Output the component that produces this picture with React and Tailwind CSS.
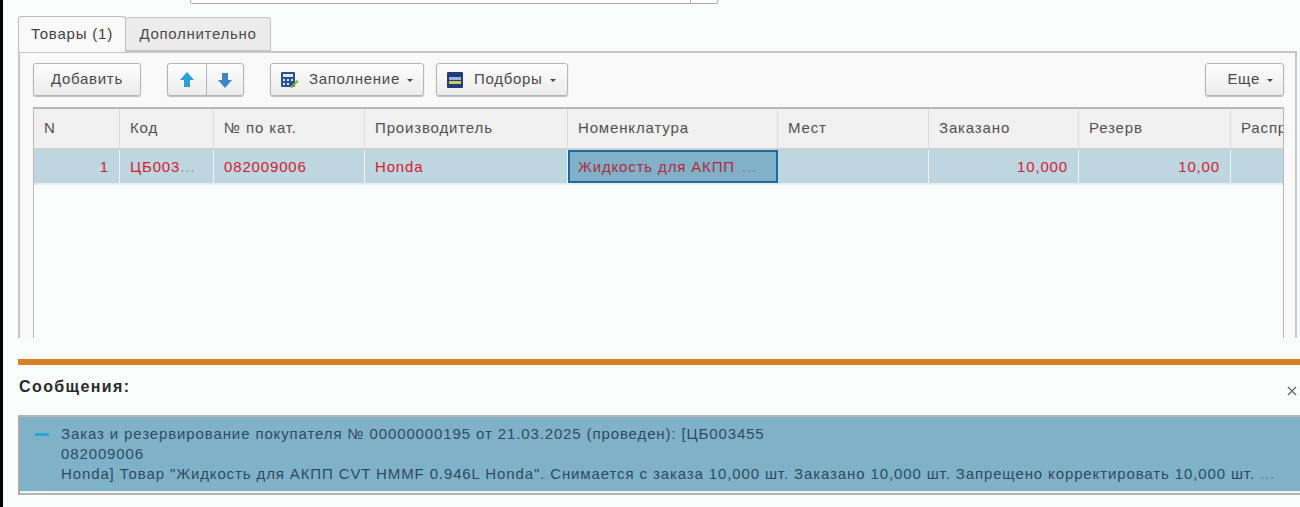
const cols = [
  { w: 'w-[86px]', h: 'N' },
  { w: 'w-[94px]', h: 'Код' },
  { w: 'w-[151px]', h: '№ по кат.' },
  { w: 'w-[203px]', h: 'Производитель' },
  { w: 'w-[210px]', h: 'Номенклатура' },
  { w: 'w-[151px]', h: 'Мест' },
  { w: 'w-[150px]', h: 'Заказано' },
  { w: 'w-[152px]', h: 'Резерв' },
  { w: 'w-[53px]', h: 'Распр' },
];

function Caret() {
  return <span className="ml-[7px] mt-[2px] inline-block h-0 w-0 border-x-[3px] border-t-[3px] border-x-transparent border-t-[#444]" />;
}

function Btn({ children, className = '' }) {
  return (
    <div className={`flex h-[33px] items-center rounded-[3px] border border-[#b4b4b4] bg-gradient-to-b from-[#fdfdfd] to-[#ececec] text-[#4a4a4a] shadow-[0_1px_1px_#bbb] ${className}`}>
      {children}
    </div>
  );
}

function Arrow({ up, color }) {
  return (
    <svg width="16" height="18" viewBox="0 0 16 18">
      <path d={up ? 'M8 1 L15 9 H11 V16 H5 V9 H1 Z' : 'M5 2 H11 V9 H15 L8 17 L1 9 H5 Z'} fill={color} />
    </svg>
  );
}

function Calc() {
  return (
    <svg width="19" height="18" viewBox="0 0 19 18">
      <rect x="1" y="1" width="14" height="15" rx="1" fill="#2b4f9b" />
      <rect x="3" y="3" width="10" height="3" fill="#dfe8f5" />
      <path d="M3 8h2v2H3zM7 8h2v2H7zM11 8h2v2h-2zM3 12h2v2H3zM7 12h2v2H7z" fill="#dfe8f5" />
      <path d="M10 16 L17 9 L18.5 10.5 L12 17 Z" fill="#7ab52f" />
      <path d="M10 16 L11 17 L9.5 17.5 Z" fill="#e8c24a" />
    </svg>
  );
}

function Pick() {
  return (
    <svg width="16" height="16" viewBox="0 0 16 16">
      <rect x="0" y="0" width="16" height="16" rx="1" fill="#1f3d7a" />
      <rect x="2" y="5" width="12" height="3" fill="#9fb2d4" />
      <rect x="2" y="9" width="12" height="3" fill="#cfc95a" />
    </svg>
  );
}

export default function App() {
  return (
    <div className="flex h-[507px] w-[1300px] flex-col overflow-hidden border-l-[3px] border-black bg-[#f9fcfa] font-['Liberation_Sans',sans-serif] text-[15px] text-[#505050]">
      <div className="ml-[187px] flex h-[4px] w-[528px] justify-end rounded-b-[2px] border-x border-b border-[#a9a9a9] bg-white">
        <div className="w-[27px] border-l border-[#a9a9a9]" />
      </div>

      <div className="ml-[15px] mt-[12px] flex h-[35px] items-end">
        <div className="z-10 -mb-px flex h-[36px] w-[108px] items-center justify-center rounded-t-[3px] border border-b-0 border-[#bdbdbd] bg-[#f9f9f9] tracking-[0.8px] text-[#404040]">
          Товары (1)
        </div>
        <div className="flex h-[34px] w-[145px] items-center justify-center rounded-t-[3px] border border-l-0 border-[#c4c4c4] bg-[#ececec] tracking-[0.7px] text-[#4a4a4a]">
          Дополнительно
        </div>
      </div>

      <div className="ml-[15px] flex h-[287px] w-[1279px] flex-col border-x-2 border-t-2 border-[#c6c6c6] bg-[#f9f9f9] pl-[13px] pr-[11px]">
        <div className="mt-[10px] flex h-[33px] items-center tracking-[0.7px]">
          <Btn className="w-[108px] justify-center">Добавить</Btn>
          <Btn className="ml-[26px] w-[77px]">
            <div className="flex h-full w-[39px] items-center justify-center border-r border-[#b4b4b4]"><Arrow up color="#2a9fd8" /></div>
            <div className="flex h-full flex-1 items-center justify-center"><Arrow color="#3f86c6" /></div>
          </Btn>
          <Btn className="ml-[26px] w-[154px] pl-[9px]">
            <Calc />
            <span className="ml-[10px]">Заполнение</span>
            <Caret />
          </Btn>
          <Btn className="ml-[12px] w-[132px] pl-[10px]">
            <Pick />
            <span className="ml-[11px]">Подборы</span>
            <Caret />
          </Btn>
          <Btn className="ml-auto w-[79px] justify-end pr-[10px]">Еще<Caret /></Btn>
        </div>

        <div className="mt-[11px] flex-1 overflow-hidden border-x border-t-2 border-[#b8b8b8] bg-[#f9fcfa] tracking-[0.85px]">
          <div className="flex h-[41px] border-b-2 border-[#cfcfcf] bg-[#f0f0f0]">
            {cols.map((c, i) => (
              <div key={c.h} className={`${c.w} flex shrink-0 items-center overflow-hidden whitespace-nowrap border-r border-[#dcdcdc] pl-[10px] ${i === 8 ? 'border-r-0' : ''}`}>
                {c.h}
              </div>
            ))}
          </div>
          <div className="flex h-[35px] border-b-2 border-[#e6eef0] bg-[#bdd6e0] text-[#d6202f]">
            <div className={`${cols[0].w} flex shrink-0 items-center justify-end border-r border-[#f0f6f8] pr-[10px] pt-[2px]`}>1</div>
            <div className={`${cols[1].w} flex shrink-0 items-center border-r border-[#f0f6f8] pl-[10px] pt-[2px]`}>ЦБ003<span className="text-[#8c8c8c]">...</span></div>
            <div className={`${cols[2].w} flex shrink-0 items-center border-r border-[#f0f6f8] pl-[10px] pt-[2px]`}>082009006</div>
            <div className={`${cols[3].w} flex shrink-0 items-center border-r border-[#f0f6f8] pl-[10px] pt-[2px]`}>Honda</div>
            <div className={`${cols[4].w} flex shrink-0 items-center border-2 border-[#1d6a9c] bg-[#81b1c8] pl-[8px] pt-[2px] text-[#b02a3e]`}>
              Жидкость для АКПП <span className="ml-[7px] text-[#7a7a7a]">...</span>
            </div>
            <div className={`${cols[5].w} shrink-0 border-r border-[#f0f6f8]`} />
            <div className={`${cols[6].w} flex shrink-0 items-center justify-end border-r border-[#f0f6f8] pr-[10px] pt-[2px]`}>10,000</div>
            <div className={`${cols[7].w} flex shrink-0 items-center justify-end border-r border-[#f0f6f8] pr-[10px] pt-[2px]`}>10,00</div>
            <div className={`${cols[8].w} shrink-0`} />
          </div>
        </div>
      </div>

      <div className="ml-[15px] mt-[21px] h-[6px] bg-[#d97f26]" />

      <div className="ml-[16px] flex h-[50px] items-center justify-between pr-[2px]">
        <div className="mt-[-6px] text-[16px] font-bold tracking-[1.4px] text-[#2a2a2a]">Сообщения:</div>
        <svg className="mt-[2px]" width="12" height="12" viewBox="0 0 12 12"><path d="M2 2 L10 10 M10 2 L2 10" stroke="#666" strokeWidth="1.2" /></svg>
      </div>

      <div className="ml-[15px] h-[80px] border-y-2 border-l-2 border-y-[#b5b5b5] border-l-[#a9a9a9] bg-[#7fb2c9] shadow-[inset_0_-2px_0_#eaf3f6]">
        <div className="flex pl-[15px] pt-[7px]">
          <div className="mt-[9px] h-[3px] w-[14px] shrink-0 bg-[#2aa5dc]" />
          <div className="ml-[12px] whitespace-nowrap leading-[20px] tracking-[0.88px] text-[#2f4a60]">
            <div>Заказ и резервирование покупателя № 00000000195 от 21.03.2025 (проведен): [ЦБ003455</div>
            <div>082009006</div>
            <div>Honda] Товар "Жидкость для АКПП CVT HMMF 0.946L Honda". Снимается с заказа 10,000 шт. Заказано 10,000 шт. Запрещено корректировать 10,000 шт. <span className="text-[#56788e]">...</span></div>
          </div>
        </div>
      </div>
    </div>
  );
}
